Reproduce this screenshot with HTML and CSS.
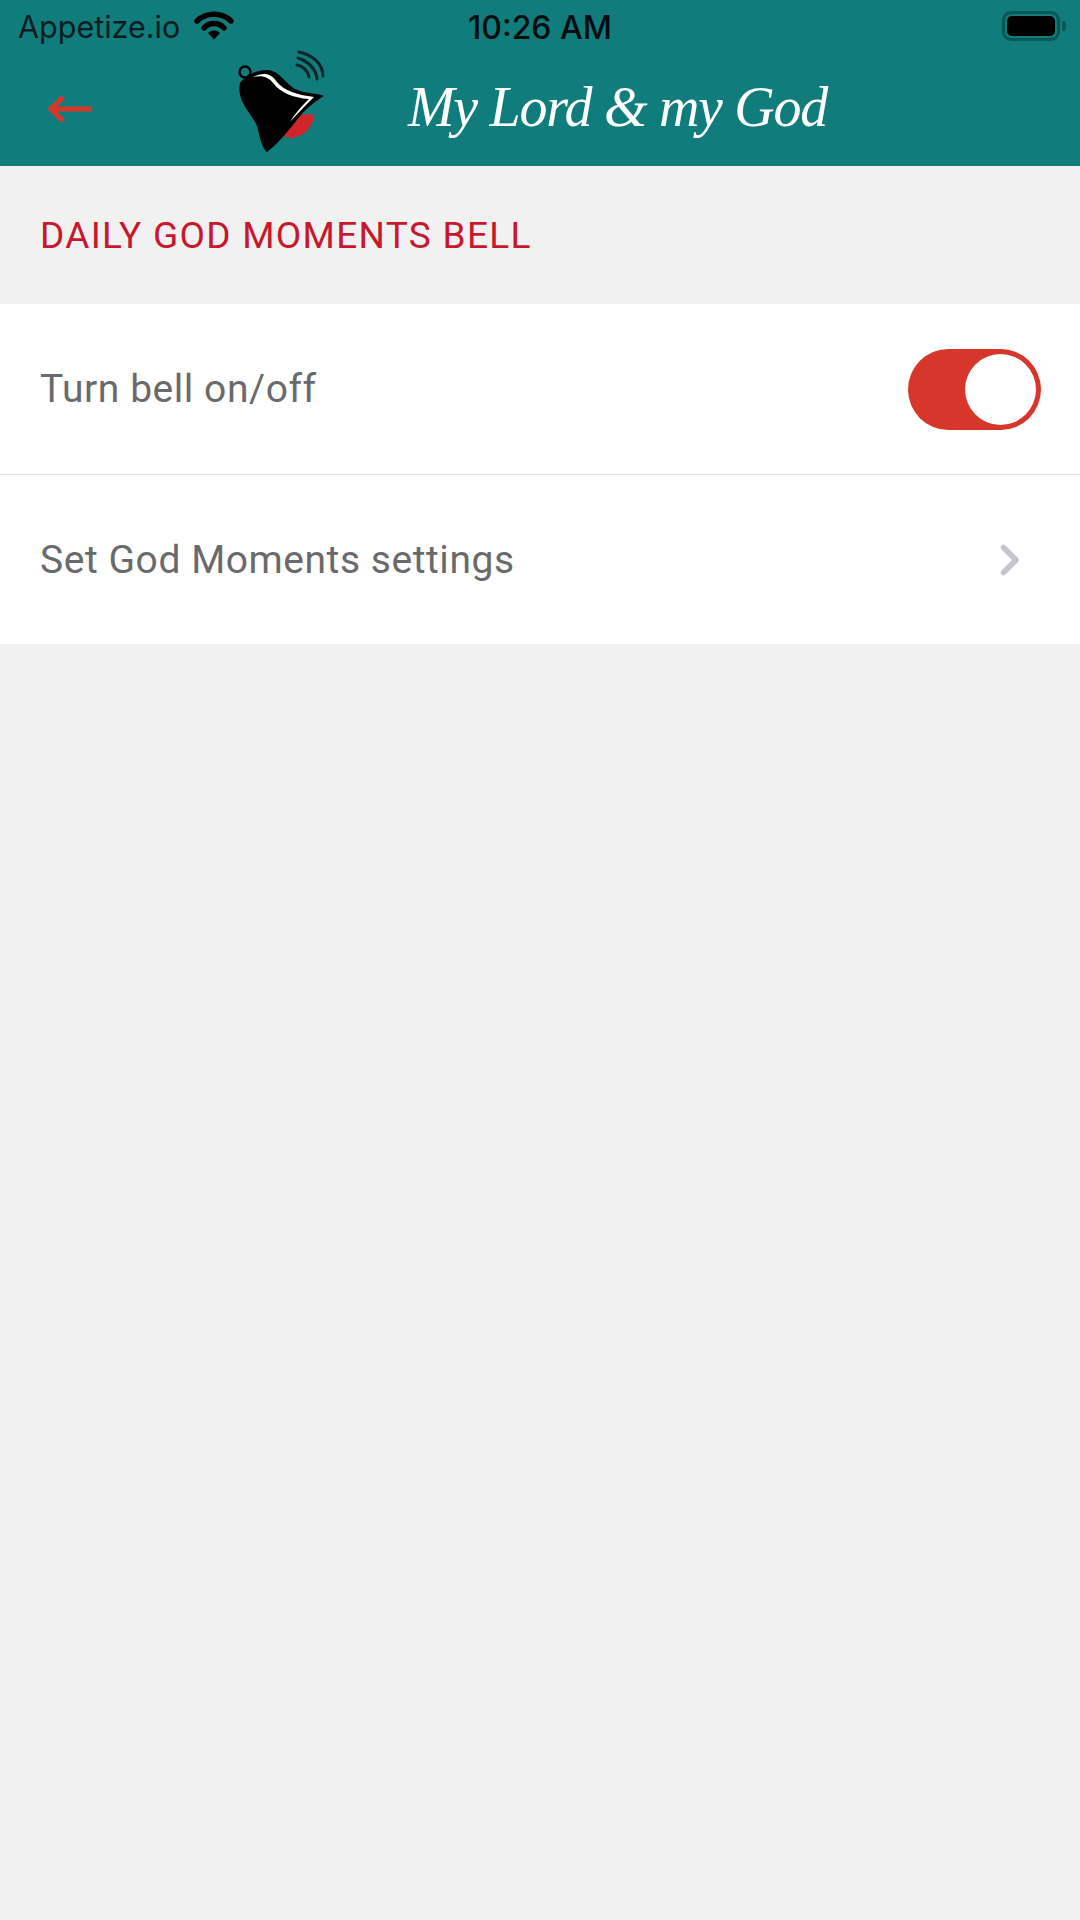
FILE: index.html
```html
<!DOCTYPE html>
<html lang="en">
<head>
    <meta charset="UTF-8">
    <meta name="viewport" content="width=device-width, initial-scale=1.0">
    <title>My Lord &amp; my God</title>
    <link rel="stylesheet" href="styles.css">
</head>
<body>
    <header class="header">
        <div class="status-bar">
            <div class="status-left">
                <span class="carrier">Appetize.io</span>
                <svg class="wifi" viewBox="0 0 40 30" width="40" height="30">
                    <path d="M3 11 C12 2 28 2 37 11" fill="none" stroke="#000" stroke-width="5.5" stroke-linecap="round"/>
                    <path d="M10 18 C15 12 25 12 30 18" fill="none" stroke="#000" stroke-width="5.5" stroke-linecap="round"/>
                    <path d="M14 23 C17 19.5 23 19.5 26 23 L20 29.5 Z" fill="#000"/>
                </svg>
            </div>
            <span class="time">10:26 AM</span>
            <div class="battery">
                <div class="battery-body"><div class="battery-level"></div></div>
                <div class="battery-nub"></div>
            </div>
        </div>
        <div class="app-bar">
            <svg class="back" viewBox="0 0 46 30" width="46" height="30">
                <path d="M5 15 H46 M17 3 L5 15 L17 27" fill="none" stroke="#d7372a" stroke-width="5"/>
            </svg>
            <svg class="bell" viewBox="0 8 115 108" width="115" height="108">
                <path d="M74 12 C88 15 98 24 98 36 M73 18 C83 21 91 29 92 39 M72 25 C78 26 83 31 84 37" fill="none" stroke="#0c2426" stroke-width="3" stroke-linecap="round"/>
                <path d="M88 74 C91 88 72 103 58 96 L75 75 Z" fill="#d0262b"/>
                <circle cx="20" cy="32" r="5.5" fill="none" stroke="#000" stroke-width="2.5"/>
                <path d="M15 43 C20 36 32 29 44 30 C55 32 61 44 70 49 C80 54 92 53 99 56 C92 60 84 66 76 75 C68 85 55 102 42 112 C37 108 35 98 32 86 C27 75 19 68 16 58 C14 52 14 48 15 43 Z" fill="#000"/>
                <path d="M28 37 C38 32 46 33 52 42 C58 50 72 55 89 57 C82 64 73 73 65 82 C71 72 78 65 84 59 C68 58 55 52 49 44 C44 37 37 35 28 37 Z" fill="#fff"/>
            </svg>
            <span class="brand">My Lord &amp; my God</span>
        </div>
    </header>

    <main>
        <h1 class="section-title">DAILY GOD MOMENTS BELL</h1>
        <div class="list">
            <div class="list-row">
                <span class="row-label">Turn bell on/off</span>
                <div class="toggle"><div class="toggle-knob"></div></div>
            </div>
            <div class="list-row list-row-link">
                <span class="row-label">Set God Moments settings</span>
                <svg class="chevron" viewBox="0 0 20 32" width="20" height="32">
                    <path d="M3.5 3.5 L16 16 L3.5 28.5" fill="none" stroke="#c4c4cc" stroke-width="5.5" stroke-linecap="round" stroke-linejoin="round"/>
                </svg>
            </div>
        </div>
    </main>
</body>
</html>
```

FILE: styles.css
```css
* {
    margin: 0;
    padding: 0;
    box-sizing: border-box;
    font-family: Roboto, "Liberation Sans", sans-serif;
}

body {
    background-color: #f1f1f2;
    min-height: 1920px;
}

.header {
    background: #107c7c;
    height: 166px;
}

.status-bar {
    height: 54px;
    display: flex;
    align-items: center;
    justify-content: space-between;
    position: relative;
    padding: 0 14px 0 18px;
}

.status-left {
    display: flex;
    align-items: center;
    gap: 14px;
}

.carrier {
    margin-top: -2px;
    font-family: Inter, sans-serif;
    font-size: 30.5px;
    color: #0b1c1e;
}

.wifi {
    margin-top: -4px;
}

.time {
    position: absolute;
    left: 468px;
    top: 8px;
    font-family: Inter, sans-serif;
    font-size: 32px;
    font-weight: 500;
    color: #050c0d;
}

.battery {
    display: flex;
    align-items: center;
    gap: 2px;
    margin-top: -2px;
}

.battery-body {
    width: 58px;
    height: 30px;
    border: 3px solid #0a5757;
    border-radius: 9px;
    padding: 2px;
}

.battery-level {
    height: 100%;
    background: #000;
    border-radius: 5px;
}

.battery-nub {
    width: 4px;
    height: 10px;
    background: #0a5757;
    border-radius: 0 3px 3px 0;
}

.app-bar {
    height: 112px;
    display: flex;
    align-items: center;
    padding-left: 46px;
}

.back {
    margin-top: -2px;
}

.bell {
    align-self: flex-start;
    margin: -6px 0 0 133px;
}

.brand {
    margin: -6px 0 0 68px;
    font-family: "Liberation Serif", serif;
    font-style: italic;
    font-size: 56px;
    letter-spacing: -1.3px;
    color: #fff;
    white-space: nowrap;
}

.section-title {
    height: 138px;
    display: flex;
    align-items: center;
    padding-left: 40px;
    font-size: 37px;
    font-weight: 400;
    letter-spacing: 1.3px;
    color: #c8172b;
}

.list {
    background: #fff;
}

.list-row {
    height: 171px;
    display: flex;
    align-items: center;
    justify-content: space-between;
    padding: 0 39px 0 40px;
    border-bottom: 1px solid #e2e2e4;
}

.list-row-link {
    height: 169px;
    padding-right: 60px;
    border-bottom: none;
}

.row-label {
    font-size: 39px;
    letter-spacing: 0.55px;
    color: #6a6a6c;
}

.toggle {
    width: 133px;
    height: 81px;
    background: #d7372a;
    border-radius: 41px;
    display: flex;
    align-items: center;
    justify-content: flex-end;
    padding-right: 5px;
}

.toggle-knob {
    width: 71px;
    height: 71px;
    background: #fff;
    border-radius: 50%;
}
```
